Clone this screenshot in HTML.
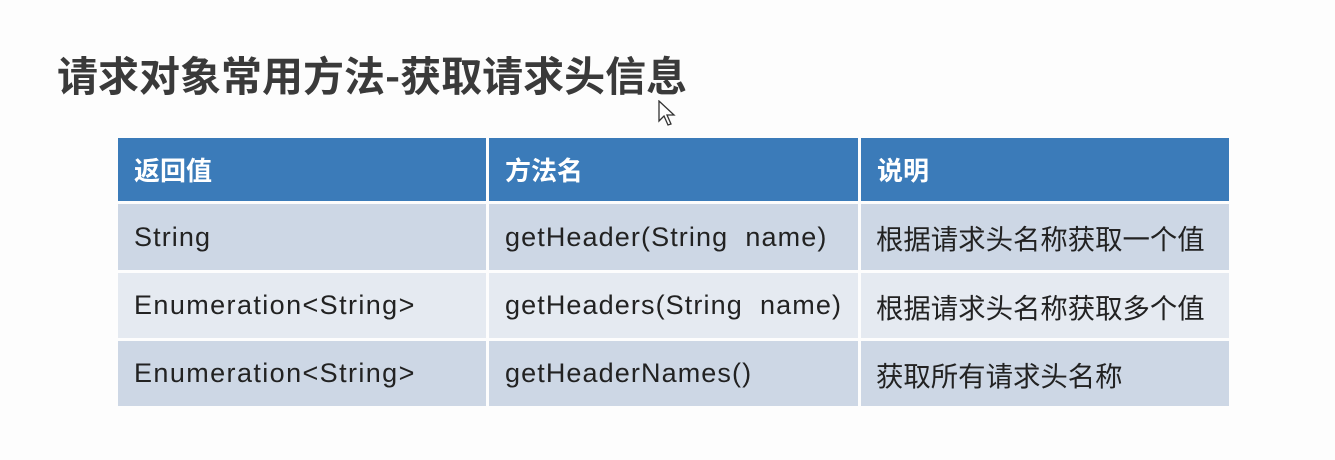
<!DOCTYPE html>
<html><head><meta charset="utf-8"><style>
body{margin:0;width:1335px;height:460px;background:#fdfdfd;position:relative;overflow:hidden;font-family:"Liberation Sans","Noto Sans CJK SC",sans-serif}
.t{position:absolute;left:57px;top:47px;font-size:41px;line-height:52px;font-weight:bold;color:#3a3a3a;white-space:nowrap;font-family:"Noto Sans CJK SC",sans-serif}
.c{position:absolute;box-sizing:border-box;padding-left:16px;display:flex;align-items:center;font-size:27px;color:#222;white-space:nowrap;letter-spacing:1.1px}
.z{font-family:"Noto Sans CJK SC",sans-serif;letter-spacing:0;font-size:27.4px}
.h{background:#3b7bb9;color:#fff;font-weight:bold;font-size:26px;letter-spacing:0;font-family:"Noto Sans CJK SC",sans-serif}
.a{background:#cdd7e5}.b{background:#e5eaf1}
</style></head><body>
<div class="t">请求对象常用方法-获取请求头信息</div>
<svg style="position:absolute;left:658px;top:100px" width="20" height="28" viewBox="0 0 20 28"><path d="M1 1 L1 21 L6 16 L10 25 L13 24 L9 15 L16 15 Z" fill="#fff" stroke="#333" stroke-width="1.3"/></svg>

<div class="c h" style="left:118px;top:138px;width:368px;height:63px">返回值</div>
<div class="c h" style="left:489px;top:138px;width:369px;height:63px">方法名</div>
<div class="c h" style="left:861px;top:138px;width:368px;height:63px">说明</div>

<div class="c a" style="left:118px;top:204px;width:368px;height:66px">String</div>
<div class="c a" style="left:489px;top:204px;width:369px;height:66px">getHeader(String&nbsp; name)</div>
<div class="c a z" style="left:861px;top:204px;width:368px;height:66px;padding-left:15px">根据请求头名称获取一个值</div>

<div class="c b" style="left:118px;top:273px;width:368px;height:65px;letter-spacing:1.4px">Enumeration&lt;String&gt;</div>
<div class="c b" style="left:489px;top:273px;width:369px;height:65px">getHeaders(String&nbsp; name)</div>
<div class="c b z" style="left:861px;top:273px;width:368px;height:65px;padding-left:15px">根据请求头名称获取多个值</div>

<div class="c a" style="left:118px;top:341px;width:368px;height:65px;letter-spacing:1.4px">Enumeration&lt;String&gt;</div>
<div class="c a" style="left:489px;top:341px;width:369px;height:65px">getHeaderNames()</div>
<div class="c a z" style="left:861px;top:341px;width:368px;height:65px;padding-left:15px">获取所有请求头名称</div>
</body></html>
